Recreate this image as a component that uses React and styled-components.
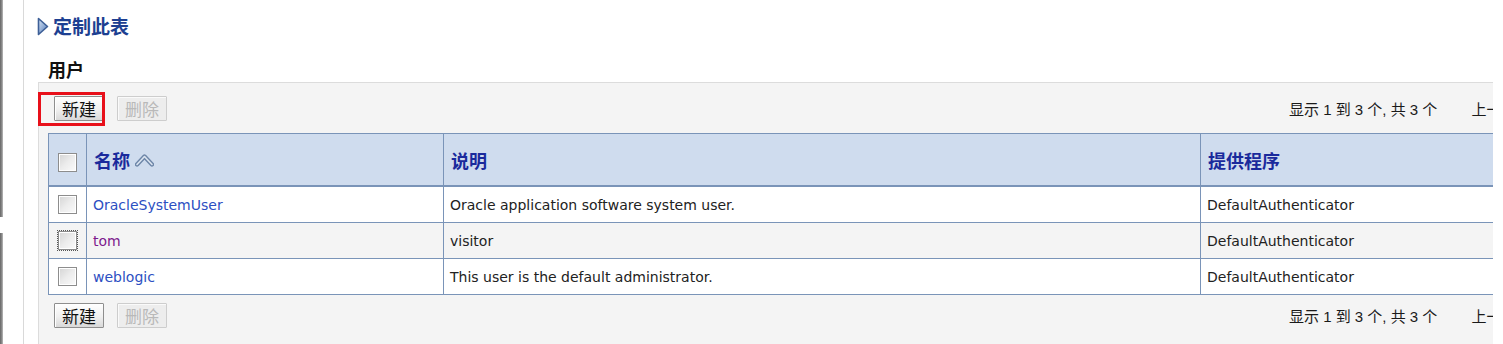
import React from 'react';
import styled, { createGlobalStyle } from 'styled-components';

const GlobalStyle = createGlobalStyle`
  html, body {
    margin: 0;
    padding: 0;
    background: #fff;
  }
  body {
    width: 1503px;
    height: 344px;
    overflow: hidden;
    font-family: "DejaVu Sans", "Noto Sans CJK SC", sans-serif;
    color: #222;
  }
`;

const Page = styled.div`
  display: flex;
  height: 344px;
`;

const Gutter = styled.div`
  width: 23px;
  flex-shrink: 0;
  border-right: 1px solid #d9d9d9;
  display: flex;
  flex-direction: column;
  gap: 16px;
`;

const EdgeBar = styled.div`
  width: 3px;
  height: ${(p) => p.$h || 'auto'};
  flex: ${(p) => (p.$h ? '0 0 auto' : '1')};
  background: linear-gradient(90deg, #666 0%, #8c8c8c 60%, #bdbdbd 100%);
`;

const Main = styled.div`
  width: 1469px;
  flex-shrink: 0;
  overflow: hidden;
  padding-left: 13px;
  box-sizing: border-box;
`;

const Title = styled.div`
  display: flex;
  align-items: center;
  gap: 4px;
  margin-top: 16px;
  height: 20px;
  font-family: "Noto Sans CJK SC", sans-serif;
  font-size: 19px;
  line-height: 20px;
  font-weight: bold;
  color: #1d3f91;
`;

const SectionLabel = styled.div`
  margin-top: 23px;
  padding-left: 11px;
  height: 20px;
  font-family: "Noto Sans CJK SC", sans-serif;
  font-size: 18px;
  line-height: 20px;
  font-weight: bold;
  color: #111;
`;

const Panel = styled.div`
  margin-top: 3px;
  margin-left: 1px;
  width: 1600px;
  height: 262px;
  box-sizing: border-box;
  padding-left: 9px;
  background: #f4f4f4;
  border-top: 1px solid #dcdcdc;
  border-left: 1px solid #dcdcdc;
`;

const Toolbar = styled.div`
  display: grid;
  grid-template-columns: 1235px auto;
  align-items: center;
  height: ${(p) => p.$h}px;
  padding-left: 6px;
`;

const ButtonGroup = styled.div`
  display: flex;
  align-items: center;
  gap: 13px;
`;

const Button = styled.button`
  height: 25px;
  padding: 0 7px;
  font-family: "Noto Sans CJK SC", sans-serif;
  font-size: 17px;
  line-height: 21px;
  color: ${(p) => (p.disabled ? '#b9b9b9' : '#111')};
  background: ${(p) =>
    p.disabled
      ? '#ededed'
      : 'linear-gradient(180deg, #ffffff 0%, #f0f0f0 55%, #d9d9d9 100%)'};
  border: 1px solid ${(p) => (p.disabled ? '#cdcdcd' : '#8e8e8e')};
  border-radius: 1px;
  box-shadow: ${(p) => (p.disabled ? 'inset 1px 1px 0 #fafafa' : 'inset 1px 1px 0 #fff')};
`;

const Highlight = styled.span`
  position: relative;
  display: inline-flex;
  &::after {
    content: '';
    position: absolute;
    top: -4px;
    bottom: -5px;
    left: -16px;
    right: -1px;
    border: 3px solid #e8101a;
    pointer-events: none;
  }
`;

const Pager = styled.div`
  white-space: nowrap;
  font-family: "Liberation Sans", "Noto Sans CJK SC", sans-serif;
  font-size: 15px;
  color: #1a1a1a;
`;

const PagerNav = styled.span`
  margin-left: 34px;
`;

const Table = styled.table`
  width: ${(p) => p.$w}px;
  table-layout: fixed;
  border-collapse: collapse;
  border: 1px solid #7a94b8;
  font-size: 14px;
`;

const HeadCell = styled.th`
  height: 51px;
  padding: 0 0 0 ${(p) => (p.$center ? 0 : 7)}px;
  text-align: ${(p) => (p.$center ? 'center' : 'left')};
  background: #cfdcee;
  border: 1px solid #7a94b8;
  border-bottom-width: 2px;
  font-family: "Noto Sans CJK SC", sans-serif;
  font-size: 18px;
  font-weight: bold;
  color: #1a2a9c;
`;

const HeadLabel = styled.span`
  display: inline-flex;
  align-items: center;
  gap: 5px;
`;

const Row = styled.tr`
  background: ${(p) => (p.$alt ? '#f4f4f4' : '#fff')};
`;

const Cell = styled.td`
  height: ${(p) => p.$h || 35}px;
  padding: 0 0 0 ${(p) => (p.$center ? 0 : 6)}px;
  text-align: ${(p) => (p.$center ? 'center' : 'left')};
  border: 1px solid #7a94b8;
  white-space: nowrap;
  overflow: hidden;
`;

const UserLink = styled.a`
  color: ${(p) => (p.$visited ? '#7d1a8c' : '#2c4fc2')};
  text-decoration: none;
`;

const Check = styled.span`
  display: inline-block;
  vertical-align: middle;
  width: 17px;
  height: 17px;
  border: 1px solid #8d8d8d;
  background: linear-gradient(135deg, #d4d4d4 0%, #ececec 50%, #fbfbfb 100%);
  box-shadow: inset 1px 1px 0 #fff, inset -1px -1px 0 #fff;
  outline: ${(p) => (p.$focus ? '1px dotted #555' : 'none')};
  outline-offset: 0;
`;

function TitleArrow() {
  return (
    <svg width="12" height="19" viewBox="0 0 12 19">
      <defs>
        <linearGradient id="ta" x1="0" y1="0" x2="1" y2="1">
          <stop offset="0" stopColor="#d9e6f6" />
          <stop offset="1" stopColor="#4f79b8" />
        </linearGradient>
      </defs>
      <path d="M1.5 1.5 L10.5 9.5 L1.5 17.5 Z" fill="url(#ta)" stroke="#3d5f97" strokeWidth="1.6" strokeLinejoin="round" />
    </svg>
  );
}

function SortUp() {
  return (
    <svg width="19" height="14" viewBox="0 0 19 14">
      <path d="M2 11.5 L9.5 3.5 L17 11.5" fill="none" stroke="#6d86a8" strokeWidth="4.4" strokeLinejoin="round" strokeLinecap="round" />
      <path d="M2 11.5 L9.5 3.5 L17 11.5" fill="none" stroke="#dbe4f0" strokeWidth="1.6" strokeLinejoin="round" strokeLinecap="round" />
    </svg>
  );
}

const users = [
  { name: 'OracleSystemUser', desc: 'Oracle application software system user.' },
  { name: 'tom', desc: 'visitor', visited: true, focus: true },
  { name: 'weblogic', desc: 'This user is the default administrator.' },
];

const TABLE_W = 1560;

function Pagination() {
  return (
    <Pager>
      显示 1 到 3 个, 共 3 个<PagerNav>上一页 | 下一页</PagerNav>
    </Pager>
  );
}

export default function App() {
  return (
    <Page>
      <GlobalStyle />
      <Gutter>
        <EdgeBar $h="217px" />
        <EdgeBar />
      </Gutter>
      <Main>
        <Title>
          <TitleArrow />
          定制此表
        </Title>
        <SectionLabel>用户</SectionLabel>
        <Panel>
          <Toolbar $h={50}>
            <ButtonGroup>
              <Highlight>
                <Button>新建</Button>
              </Highlight>
              <Button disabled>删除</Button>
            </ButtonGroup>
            <Pagination />
          </Toolbar>
          <Table $w={TABLE_W}>
            <colgroup>
              <col style={{ width: 38 }} />
              <col style={{ width: 357 }} />
              <col style={{ width: 757 }} />
              <col />
            </colgroup>
            <thead>
              <tr>
                <HeadCell $center>
                  <Check />
                </HeadCell>
                <HeadCell>
                  <HeadLabel>
                    名称 <SortUp />
                  </HeadLabel>
                </HeadCell>
                <HeadCell>说明</HeadCell>
                <HeadCell>提供程序</HeadCell>
              </tr>
            </thead>
            <tbody>
              {users.map((u, i) => (
                <Row key={u.name} $alt={i === 1}>
                  <Cell $center $h={i === 2 ? 34 : 35}>
                    <Check $focus={u.focus} />
                  </Cell>
                  <Cell>
                    <UserLink href="#" $visited={u.visited}>
                      {u.name}
                    </UserLink>
                  </Cell>
                  <Cell>{u.desc}</Cell>
                  <Cell>DefaultAuthenticator</Cell>
                </Row>
              ))}
            </tbody>
          </Table>
          <Toolbar $h={40}>
            <ButtonGroup>
              <Button>新建</Button>
              <Button disabled>删除</Button>
            </ButtonGroup>
            <Pagination />
          </Toolbar>
        </Panel>
      </Main>
    </Page>
  );
}
